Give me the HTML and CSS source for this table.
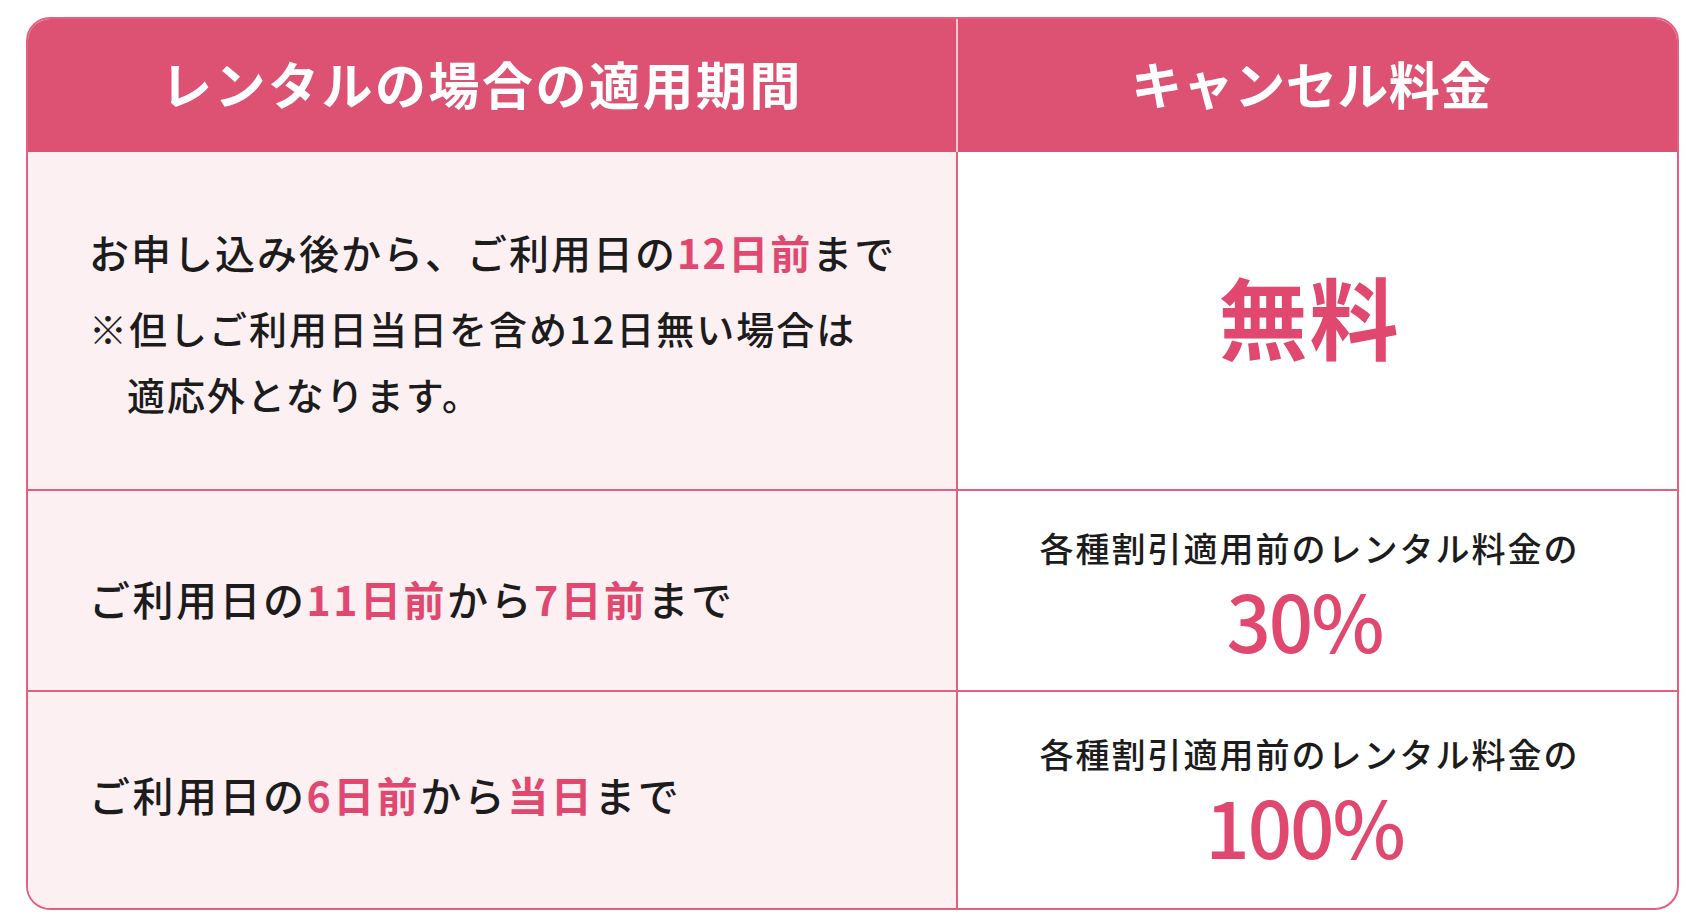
FILE: index.html
```html
<!DOCTYPE html>
<html lang="ja">
<head>
<meta charset="utf-8">
<title>キャンセル料金</title>
<link rel="stylesheet" href="styles.css">
</head>
<body>
<div class="table">
  <div class="head head-left">レンタルの場合の適用期間</div>
  <div class="head head-right">キャンセル料金</div>

  <div class="cell period period-1">
    <p class="main">お申し込み後から、ご利用日の<em>12日前</em>まで</p>
    <p class="note">※但しご利用日当日を含め12日無い場合は</p>
    <p class="note indent">適応外となります。</p>
  </div>
  <div class="cell fee fee-1"><span class="free">無料</span></div>

  <div class="cell period period-2">
    <p class="main">ご利用日の<em>11日前</em>から<em>7日前</em>まで</p>
  </div>
  <div class="cell fee fee-2">
    <p class="fee-label">各種割引適用前のレンタル料金の</p>
    <p class="fee-rate">30%</p>
  </div>

  <div class="cell period period-3 last">
    <p class="main">ご利用日の<em>6日前</em>から<em>当日</em>まで</p>
  </div>
  <div class="cell fee fee-3 last">
    <p class="fee-label">各種割引適用前のレンタル料金の</p>
    <p class="fee-rate">100%</p>
  </div>
</div>
</body>
</html>
```

FILE: styles.css
```css
* { box-sizing: border-box; }

html, body {
  margin: 0;
  padding: 0;
  background: #ffffff;
}

body {
  font-family: "Noto Sans CJK JP", "Noto Sans", sans-serif;
  color: #1c1c1c;
  padding: 17px 0 0 26px;
}

p { margin: 0; }

.table {
  width: 1653px;
  display: grid;
  grid-template-columns: 930px 1fr;
  grid-template-rows: 133px 339px 201px 216px;
  border: 2px solid #e4607f;
  border-radius: 24px;
  overflow: hidden;
  background: #ffffff;
}

.head {
  background: #dd5272;
  color: #ffffff;
  font-weight: 700;
  font-size: 51px;
  letter-spacing: 2.5px;
  display: flex;
  align-items: center;
  justify-content: center;
  padding-bottom: 6px;
}

.head-left {
  border-right: 2px solid #f4c6d1;
  padding-right: 20px;
}

.head-right {
  padding-right: 12px;
  letter-spacing: 0.5px;
}

.cell {
  border-bottom: 2px solid #e4607f;
  display: flex;
  flex-direction: column;
  justify-content: center;
}

.cell.last { border-bottom: none; }

.period {
  background: #fcf0f3;
  border-right: 2px solid #e4607f;
  padding-left: 61px;
}

.period-1 { padding-top: 4px; }
.period-2 { padding-top: 14px; }
.period-3 { padding-bottom: 12px; }

.main {
  font-size: 40px;
  font-weight: 500;
  letter-spacing: 2px;
  line-height: 66px;
}

.period-2 .main,
.period-3 .main {
  font-size: 41px;
  letter-spacing: 2.5px;
}

.period-1 .main { margin-bottom: 10px; }

.main em {
  font-style: normal;
  font-weight: 700;
  color: #e0486f;
}

.note {
  font-size: 38px;
  font-weight: 500;
  letter-spacing: 2px;
  line-height: 66px;
}

.note.indent { padding-left: 38px; }

.fee {
  align-items: center;
  text-align: center;
  padding-right: 16px;
}

.fee-1 { padding-bottom: 12px; }

.free {
  font-size: 89px;
  font-weight: 700;
  color: #e0486f;
  letter-spacing: 2px;
  line-height: 1;
}

.fee-label {
  font-size: 34px;
  font-weight: 500;
  letter-spacing: 2px;
  line-height: 44px;
}

.fee-rate {
  font-size: 78px;
  font-weight: 500;
  color: #e0486f;
  line-height: 90px;
  margin-top: 4px;
  letter-spacing: -2px;
  padding-right: 10px;
}

.fee-2 { padding-top: 8px; }
.fee-3 { padding-top: 2px; }
```
